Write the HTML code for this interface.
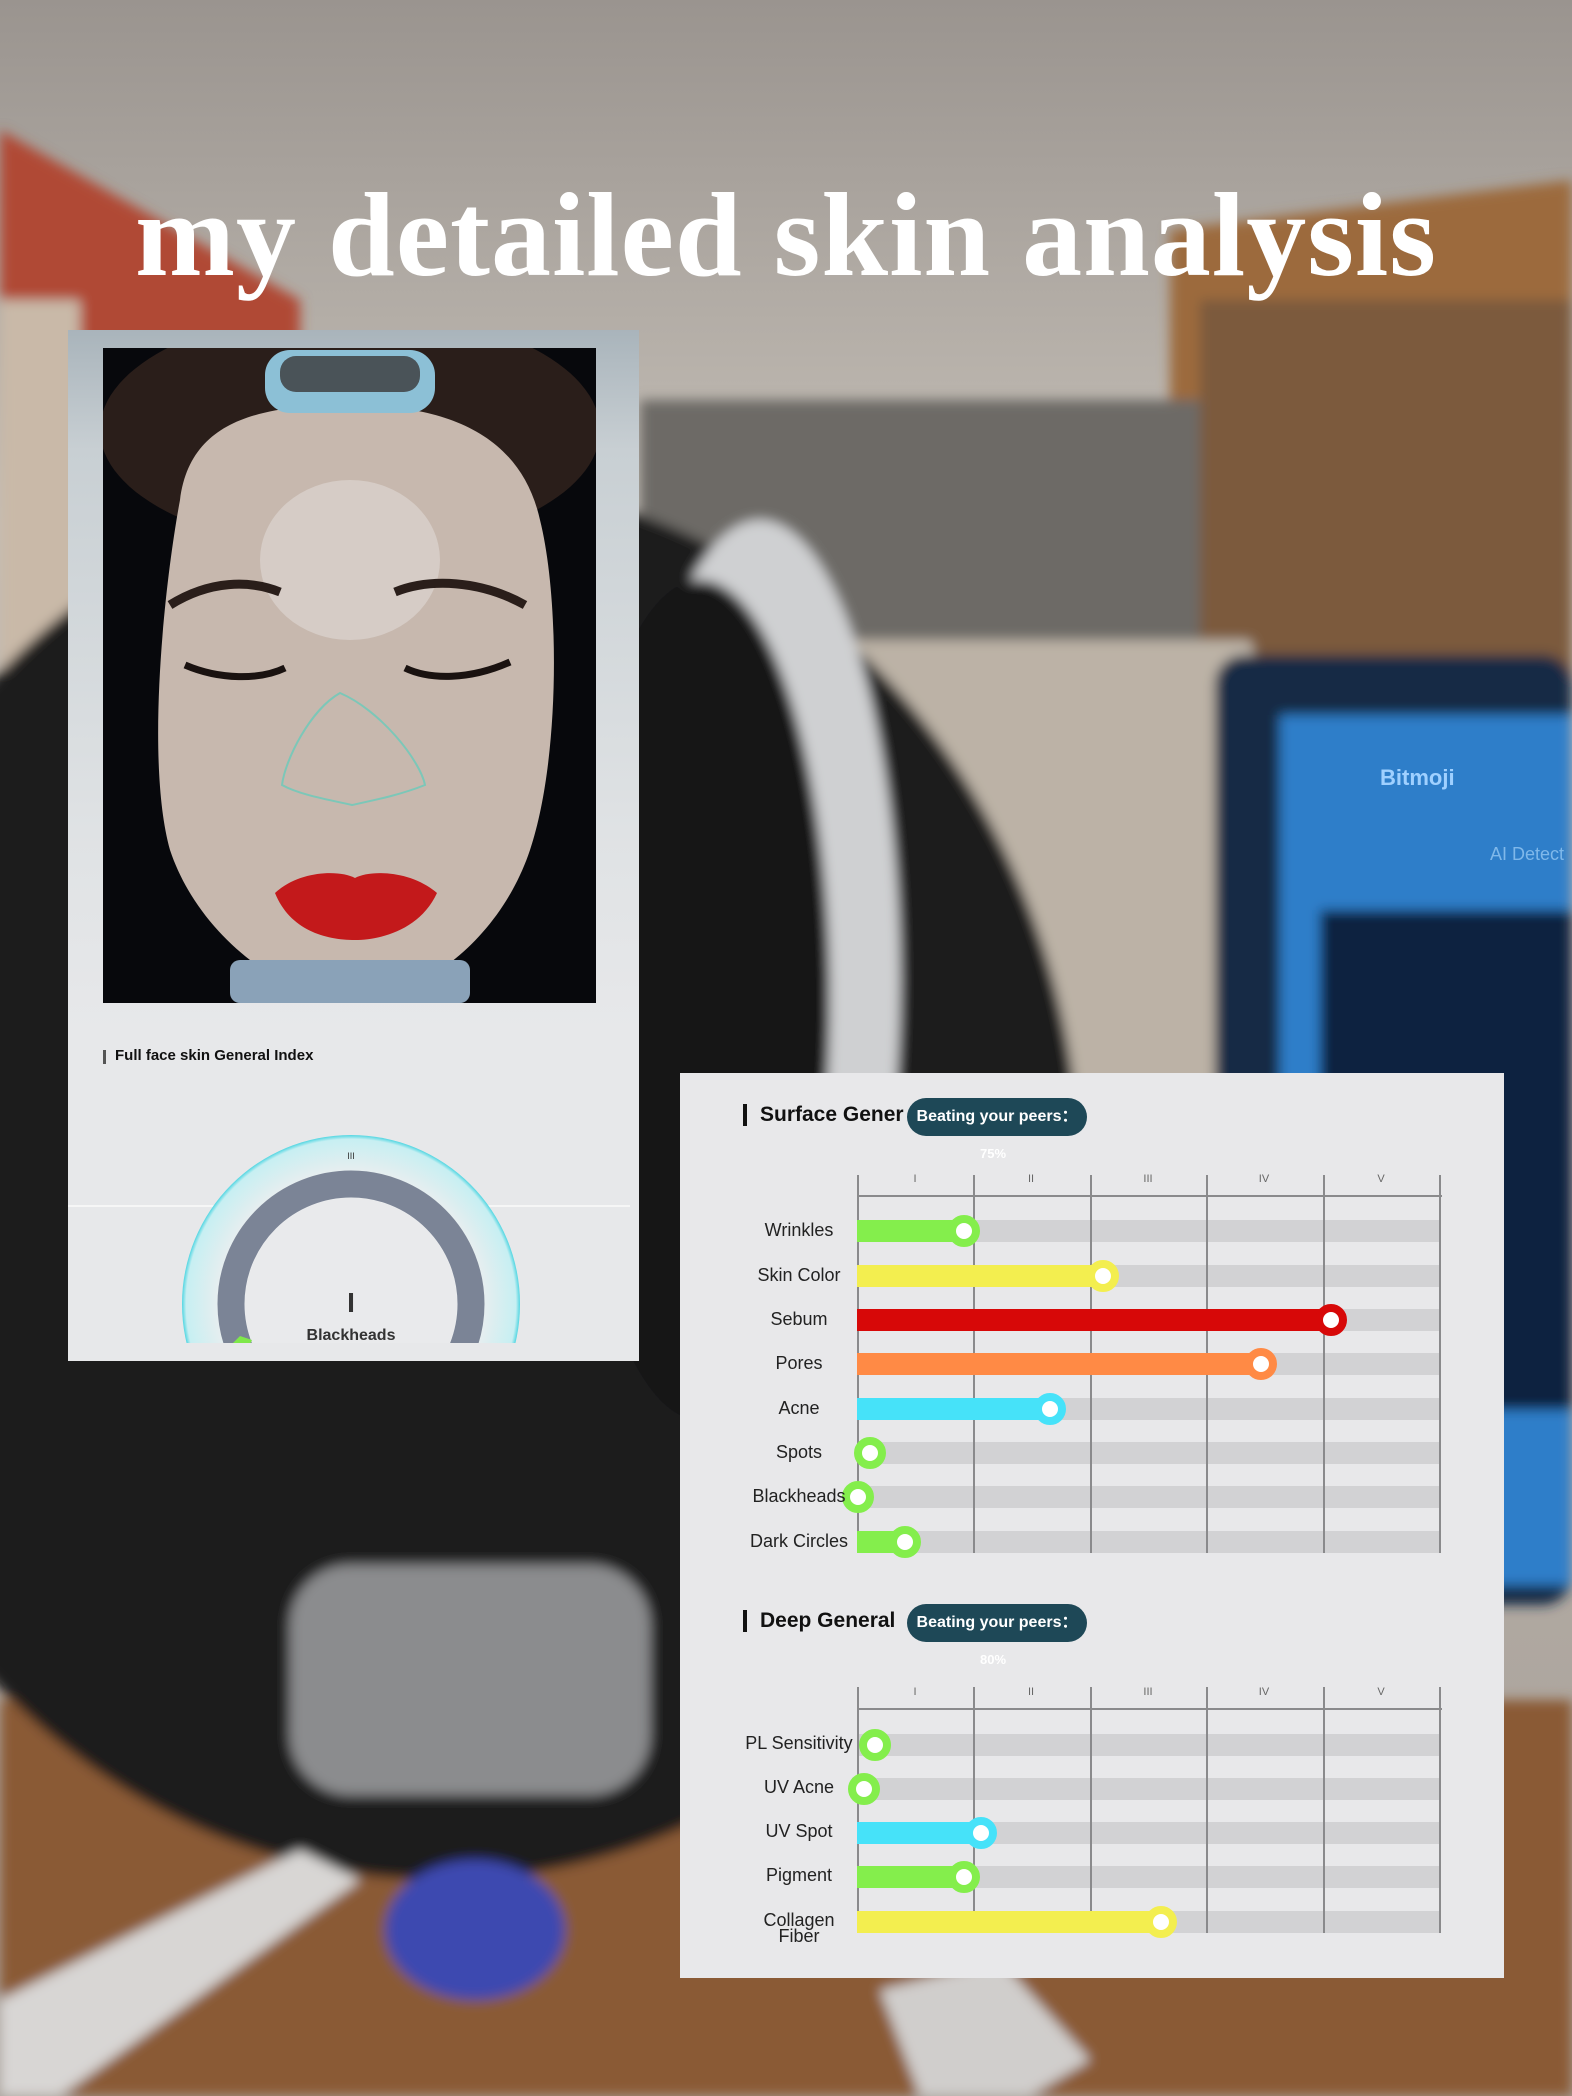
<!DOCTYPE html>
<html><head><meta charset="utf-8"><style>
*{margin:0;padding:0;box-sizing:border-box}
body{width:1572px;height:2096px;overflow:hidden;position:relative;background:#9a948d;font-family:"Liberation Sans",sans-serif}
.a{position:absolute}
.lbl{position:absolute;width:140px;left:729px;text-align:center;font-size:18px;color:#222;line-height:20px}
.band{position:absolute;left:857px;width:583px;height:22px;background:#d2d2d4}
.bar{position:absolute;left:857px;height:22px}
.dot{position:absolute;width:32px;height:32px;border-radius:50%;background:#fff;border:8px solid}
.vl{position:absolute;width:2px;background:#8a8a8c}
.num{position:absolute;font-size:11px;color:#666;width:20px;text-align:center}
.pill{position:absolute;left:907px;width:180px;height:38px;border-radius:19px;background:#1e4857;color:#fff;font-weight:bold;font-size:16px;line-height:38px;text-align:center}
</style></head><body>
<svg class="a" style="left:0;top:0" width="1572" height="2096">
<defs>
<linearGradient id="ceil" x1="0" y1="0" x2="0" y2="1"><stop offset="0" stop-color="#9a948f"/><stop offset=".25" stop-color="#c4beb6"/><stop offset=".5" stop-color="#b8b1a9"/><stop offset="1" stop-color="#a8a099"/></linearGradient>
<filter id="bl"><feGaussianBlur stdDeviation="6"/></filter>
</defs>
<rect width="1572" height="2096" fill="url(#ceil)"/>
<g filter="url(#bl)">
<polygon points="0,130 300,300 300,700 0,700" fill="#b04a35"/>
<rect x="0" y="300" width="80" height="400" fill="#c9b9a8"/>
<polygon points="1170,230 1572,180 1572,700 1170,700" fill="#9c6a3e"/>
<rect x="1200" y="300" width="372" height="400" fill="#7b5a3e"/>
<rect x="640" y="400" width="560" height="250" fill="#6d6a66"/>
<polygon points="800,640 1250,640 1400,1100 800,1100" fill="#bcb2a6"/>
<rect x="0" y="1700" width="1572" height="396" fill="#8a5a35"/>
<ellipse cx="440" cy="1180" rx="640" ry="700" fill="#1a1a1e"/>
<ellipse cx="760" cy="980" rx="140" ry="460" fill="#cfd0d2"/>
<ellipse cx="700" cy="1000" rx="130" ry="420" fill="#141416"/>
<rect x="1215" y="655" width="357" height="950" rx="30" fill="#152a45"/>
<rect x="1280" y="715" width="292" height="870" fill="#2f7ec9"/>
<rect x="1320" y="910" width="252" height="500" fill="#0e2240"/>
<rect x="290" y="1565" width="360" height="230" rx="60" fill="#8b8c8e"/>
<ellipse cx="475" cy="1930" rx="90" ry="70" fill="#3d48b0"/>
<polygon points="0,2000 300,1850 360,1880 60,2096 0,2096" fill="#d8d6d4"/>
<polygon points="880,1990 1000,1960 1090,2060 1030,2096 920,2096" fill="#d0cecc"/>
</g>
<text x="1380" y="785" font-family="Liberation Sans" font-size="22" font-weight="bold" fill="#9fd0ff">Bitmoji</text>
<text x="1490" y="860" font-family="Liberation Sans" font-size="18" fill="#7fb8ea">AI Detect</text>
</svg>

<div class="a" style="left:0;top:170px;width:1572px;text-align:center;font-family:'Liberation Serif',serif;font-weight:bold;font-size:120px;color:#fff;letter-spacing:1px;line-height:130px;white-space:nowrap">my detailed skin analysis</div>

<div class="a" style="left:68px;top:330px;width:571px;height:1031px;background:linear-gradient(#a9b4bb 0,#c8cfd3 120px,#dfe2e4 500px,#e7e8ea 700px)"></div>
<svg class="a" style="left:103px;top:348px" width="493" height="655" viewBox="103 348 493 655">
<rect x="103" y="348" width="493" height="655" fill="#07080c"/>
<ellipse cx="350" cy="430" rx="250" ry="120" fill="#2a1e1a"/>
<path d="M180,500 C190,420 260,405 350,405 C440,405 520,430 540,520 C560,600 560,760 530,850 C500,940 420,1000 350,1002 C290,1000 200,940 170,850 C145,760 165,580 180,500Z" fill="#c7b8ae"/>
<rect x="230" y="960" width="240" height="43" rx="10" fill="#8aa2b8"/>
<ellipse cx="350" cy="560" rx="90" ry="80" fill="#d6ccc6"/>
<path d="M170,605 C210,580 250,580 280,592" stroke="#2a1e1a" stroke-width="9" fill="none"/>
<path d="M395,592 C430,578 480,580 525,605" stroke="#2a1e1a" stroke-width="9" fill="none"/>
<path d="M185,665 C220,680 260,680 285,668" stroke="#1a1210" stroke-width="7" fill="none"/>
<path d="M405,668 C430,680 470,680 510,662" stroke="#1a1210" stroke-width="7" fill="none"/>
<path d="M340,693 C310,710 285,760 282,785 C300,795 330,800 352,805 C375,800 400,795 425,785 C420,760 380,710 340,693Z" fill="none" stroke="#7cc7b8" stroke-width="2"/>
<path d="M275,893 C300,870 340,870 355,878 C370,870 410,870 437,893 C420,930 380,940 355,940 C325,940 290,930 275,893Z" fill="#c3191b"/>
<rect x="265" y="350" width="170" height="63" rx="25" fill="#8cc0d6"/>
<rect x="280" y="356" width="140" height="36" rx="16" fill="#4a5358"/>
</svg>
<div class="a" style="left:103px;top:1050px;width:3px;height:14px;background:#555"></div>
<div class="a" style="left:115px;top:1047px;font-size:15px;font-weight:bold;color:#111">Full face skin General Index</div>
<svg class="a" style="left:68px;top:1100px" width="571" height="245" viewBox="68 1100 571 245">
<defs><radialGradient id="cg" cx="351" cy="1304" r="170" gradientUnits="userSpaceOnUse"><stop offset=".75" stop-color="#eceeef"/><stop offset=".97" stop-color="#c7eff2"/><stop offset="1" stop-color="#35d0de"/></radialGradient></defs>
<line x1="68" y1="1206" x2="630" y2="1206" stroke="#fff" stroke-width="1.5" opacity=".8"/>
<circle cx="351" cy="1304" r="169" fill="url(#cg)"/>
<circle cx="351" cy="1304" r="120" fill="none" stroke="#7b8496" stroke-width="27"/>
<circle cx="351" cy="1304" r="106" fill="#e9eaec"/>
<text x="351" y="1159" font-size="9" text-anchor="middle" fill="#333">III</text>
<text x="351" y="1312" font-size="28" font-weight="bold" text-anchor="middle" fill="#333">I</text>
<text x="351" y="1340" font-size="16" font-weight="bold" text-anchor="middle" fill="#333" font-family="Liberation Sans">Blackheads</text>
<path d="M232,1344 L240,1336 L252,1340 L250,1344Z" fill="#7fe84a"/>
</svg>
<div class="a" style="left:68px;top:1343px;width:571px;height:18px;background:#e7e8ea"></div>

<div class="a" style="left:680px;top:1073px;width:824px;height:905px;background:#e8e8ea"></div>
<div class="a" style="left:743px;top:1104px;width:4px;height:22px;background:#111"></div>
<div class="a" style="left:760px;top:1103px;font-size:21px;font-weight:bold;color:#111">Surface Gener</div>
<div class="pill" style="top:1098px">Beating your peers：</div>
<div class="a" style="left:980px;top:1146px;font-size:13px;color:#fff;font-weight:bold">75%</div>
<div class="a" style="left:743px;top:1610px;width:4px;height:22px;background:#111"></div>
<div class="a" style="left:760px;top:1609px;font-size:21px;font-weight:bold;color:#111">Deep General</div>
<div class="pill" style="top:1604px">Beating your peers：</div>
<div class="a" style="left:980px;top:1652px;font-size:13px;color:#fff;font-weight:bold">80%</div>

<div class="band" style="top:1220px"></div><div class="band" style="top:1265px"></div><div class="band" style="top:1309px"></div><div class="band" style="top:1353px"></div><div class="band" style="top:1398px"></div><div class="band" style="top:1442px"></div><div class="band" style="top:1486px"></div><div class="band" style="top:1531px"></div>
<div class="a" style="left:857px;top:1195px;width:585px;height:2px;background:#8a8a8c"></div>
<div class="vl" style="left:857px;top:1175px;height:378px"></div><div class="vl" style="left:973px;top:1175px;height:378px"></div><div class="vl" style="left:1090px;top:1175px;height:378px"></div><div class="vl" style="left:1206px;top:1175px;height:378px"></div><div class="vl" style="left:1323px;top:1175px;height:378px"></div><div class="vl" style="left:1439px;top:1175px;height:378px"></div>
<div class="num" style="left:905px;top:1173px">I</div><div class="num" style="left:1021px;top:1173px">II</div><div class="num" style="left:1138px;top:1173px">III</div><div class="num" style="left:1254px;top:1173px">IV</div><div class="num" style="left:1371px;top:1173px">V</div>

<div class="bar" style="top:1220px;width:107px;background:#84ee4c"></div><div class="dot" style="left:948px;top:1215px;border-color:#84ee4c"></div>
<div class="bar" style="top:1265px;width:246px;background:#f3ee4f"></div><div class="dot" style="left:1087px;top:1260px;border-color:#f3ee4f"></div>
<div class="bar" style="top:1309px;width:474px;background:#d70808"></div><div class="dot" style="left:1315px;top:1304px;border-color:#d70808"></div>
<div class="bar" style="top:1353px;width:404px;background:#ff8a45"></div><div class="dot" style="left:1245px;top:1348px;border-color:#ff8a45"></div>
<div class="bar" style="top:1398px;width:193px;background:#46e2f9"></div><div class="dot" style="left:1034px;top:1393px;border-color:#46e2f9"></div>
<div class="dot" style="left:854px;top:1437px;border-color:#84ee4c"></div>
<div class="dot" style="left:842px;top:1481px;border-color:#84ee4c"></div>
<div class="bar" style="top:1531px;width:48px;background:#84ee4c"></div><div class="dot" style="left:889px;top:1526px;border-color:#84ee4c"></div>

<div class="lbl" style="top:1220px">Wrinkles</div>
<div class="lbl" style="top:1265px">Skin Color</div>
<div class="lbl" style="top:1309px">Sebum</div>
<div class="lbl" style="top:1353px">Pores</div>
<div class="lbl" style="top:1398px">Acne</div>
<div class="lbl" style="top:1442px">Spots</div>
<div class="lbl" style="top:1486px">Blackheads</div>
<div class="lbl" style="top:1531px">Dark Circles</div>

<div class="band" style="top:1734px"></div><div class="band" style="top:1778px"></div><div class="band" style="top:1822px"></div><div class="band" style="top:1866px"></div><div class="band" style="top:1911px"></div>
<div class="a" style="left:857px;top:1708px;width:585px;height:2px;background:#8a8a8c"></div>
<div class="vl" style="left:857px;top:1687px;height:246px"></div><div class="vl" style="left:973px;top:1687px;height:246px"></div><div class="vl" style="left:1090px;top:1687px;height:246px"></div><div class="vl" style="left:1206px;top:1687px;height:246px"></div><div class="vl" style="left:1323px;top:1687px;height:246px"></div><div class="vl" style="left:1439px;top:1687px;height:246px"></div>
<div class="num" style="left:905px;top:1686px">I</div><div class="num" style="left:1021px;top:1686px">II</div><div class="num" style="left:1138px;top:1686px">III</div><div class="num" style="left:1254px;top:1686px">IV</div><div class="num" style="left:1371px;top:1686px">V</div>

<div class="dot" style="left:859px;top:1729px;border-color:#84ee4c"></div>
<div class="dot" style="left:848px;top:1773px;border-color:#84ee4c"></div>
<div class="bar" style="top:1822px;width:124px;background:#46e2f9"></div><div class="dot" style="left:965px;top:1817px;border-color:#46e2f9"></div>
<div class="bar" style="top:1866px;width:107px;background:#84ee4c"></div><div class="dot" style="left:948px;top:1861px;border-color:#84ee4c"></div>
<div class="bar" style="top:1911px;width:304px;background:#f3ee4f"></div><div class="dot" style="left:1145px;top:1906px;border-color:#f3ee4f"></div>

<div class="lbl" style="top:1733px">PL Sensitivity</div>
<div class="lbl" style="top:1777px">UV Acne</div>
<div class="lbl" style="top:1821px">UV Spot</div>
<div class="lbl" style="top:1865px">Pigment</div>
<div class="lbl" style="top:1912px;line-height:16px">Collagen<br>Fiber</div>
</body></html>
